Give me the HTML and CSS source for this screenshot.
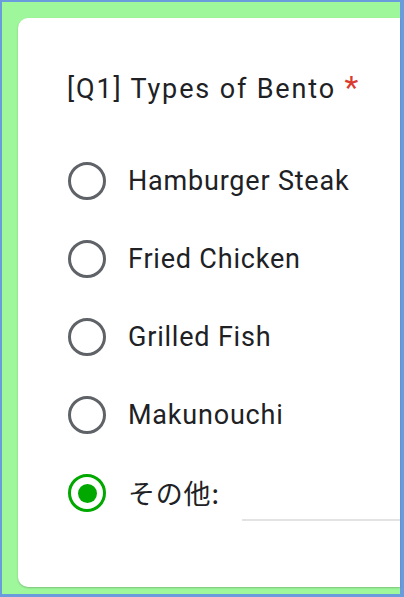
FILE: index.html
```html
<!DOCTYPE html>
<html lang="ja">
<head>
<meta charset="utf-8">
<link rel="stylesheet" href="styles.css">
</head>
<body>
<div class="frame">
  <div class="card">
    <div class="title">[Q1] Types of Bento <span class="req">*</span></div>
    <div class="options">
      <div class="row"><span class="radio"></span><span class="label">Hamburger Steak</span></div>
      <div class="row"><span class="radio"></span><span class="label">Fried Chicken</span></div>
      <div class="row"><span class="radio"></span><span class="label">Grilled Fish</span></div>
      <div class="row"><span class="radio"></span><span class="label">Makunouchi</span></div>
      <div class="row"><span class="radio checked"></span><span class="label jp">その他:</span><span class="other"></span></div>
    </div>
  </div>
</div>
</body>
</html>
```

FILE: styles.css
```css
* { box-sizing: border-box; }
html, body { margin: 0; padding: 0; }
body {
  width: 404px;
  height: 597px;
  overflow: hidden;
  font-family: Roboto, "Noto Sans CJK JP", sans-serif;
  color: #202124;
}
.frame {
  width: 404px;
  height: 597px;
  background: #9ef79b;
  border-style: solid;
  border-color: #6a9bdc;
  border-width: 2px 4px 3px 2px;
  padding: 16px 0 7px 16px;
  display: flex;
}
.card {
  flex: 1;
  background: #fff;
  border-radius: 10px 0 0 10px;
  box-shadow: 0 1px 2px rgba(0,0,0,0.22);
  padding: 55px 0 55px 49px;
  display: flex;
  flex-direction: column;
}
.title {
  font-size: 27px;
  line-height: 32px;
  letter-spacing: 1.85px;
}
.req {
  color: #db3a2e;
  letter-spacing: 0;
  font-size: 32px;
  line-height: 0;
}
.options {
  margin-top: 37px;
  display: flex;
  flex-direction: column;
}
.row {
  height: 78px;
  display: flex;
  align-items: center;
}
.radio {
  width: 38px;
  height: 38px;
  border: 3px solid #5f6368;
  border-radius: 50%;
  flex: none;
  display: flex;
  align-items: center;
  justify-content: center;
  margin-left: 1px;
}
.radio.checked { border-color: #00a800; }
.radio.checked::after {
  content: "";
  width: 19px;
  height: 19px;
  border-radius: 50%;
  background: #00a800;
}
.label {
  margin-left: 22px;
  font-size: 27px;
  line-height: 32px;
  letter-spacing: 0.8px;
}
.label.jp {
  font-family: "Noto Sans CJK JP", sans-serif;
}
.other {
  flex: 1;
  height: 2px;
  background: #e3e3e3;
  margin-left: 22px;
  align-self: flex-end;
  margin-bottom: 11px;
}
```
